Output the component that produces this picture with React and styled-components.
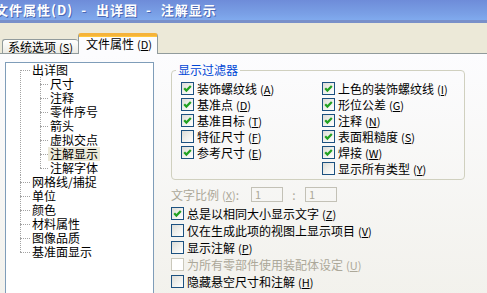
import React from 'react';
import styled, { createGlobalStyle } from 'styled-components';

const Global = createGlobalStyle`
  html, body { margin: 0; padding: 0; background: #ece9d8; }
  body { font-family: "Noto Sans CJK SC", "Noto Sans", sans-serif; font-size: 12px; color: #000; }
`;

const Window = styled.div`
  width: 487px;
  height: 293px;
  overflow: hidden;
  display: flex;
  flex-direction: column;
  background: #ece9d8;
`;

const TitleBar = styled.div`
  flex: none;
  height: 20px;
  border-bottom: 3px solid #7990c9;
  background: linear-gradient(#6e8cd9, #7aa0e6 70%, #80aaee);
  display: flex;
  align-items: center;
  white-space: nowrap;
`;

const TitleText = styled.span`
  margin-left: -5px;
  color: #fff;
  font-weight: bold;
  font-size: 13px;
  letter-spacing: 1px;
  line-height: 20px;
  text-shadow: 1px 1px 0 #4b68b4;
`;

const Sep = styled.span`
  padding: 0 9px 0 8px;
`;

const TabStrip = styled.div`
  flex: none;
  height: 30px;
  border-bottom: 1px solid #919b9c;
  display: flex;
  align-items: flex-end;
  padding-left: 2px;
`;

const Tab = styled.div`
  box-sizing: border-box;
  border: 1px solid #919b9c;
  border-bottom: none;
  border-radius: 3px 3px 0 0;
  white-space: nowrap;
  display: flex;
  align-items: center;
  ${p => p.$active ? `
    width: 80px;
    height: 21px;
    margin-bottom: -1px;
    background: #fcfcfe;
    border-top: 3px solid #f5b33a;
    box-shadow: inset 0 1px 0 #ffc83c;
    padding: 0 0 2px 7px;
  ` : `
    width: 76px;
    height: 14px;
    background: linear-gradient(#ffffff, #ecebe5);
    border-right: none;
    padding-left: 5px;
  `}
  font-size: 12px;
  line-height: 14px;
`;

const Key = styled.span`
  font-size: 11px;
  margin-left: 3px;
  u { text-decoration: underline; text-underline-offset: 1px; }
`;

const Panel = styled.div`
  flex: 1;
  display: flex;
  align-items: flex-start;
  padding: 8px 0 0 5px;
  background: linear-gradient(#fcfcfe, #f1f0ea);
`;

const TreeBox = styled.div`
  flex: none;
  width: 147px;
  height: 260px;
  border: 1px solid #7f9db9;
  background: #fff;
`;

const TreeList = styled.ul`
  list-style: none;
  margin: 0 0 0 ${p => p.$indent}px;
  padding: 0;
`;

const dots = 'repeating-linear-gradient(to bottom, #a3a3a3 0 1px, transparent 1px 2px)';

const TreeNode = styled.li`
  background-image: ${dots};
  background-repeat: no-repeat;
  ${p => p.$line === 'toMid' ? `
    background-size: 1px 8px;
    background-position: 0 0;
  ` : p.$line === 'fromMid' ? `
    background-size: 1px calc(100% - 7px);
    background-position: 0 7px;
  ` : `
    background-size: 1px 100%;
    background-position: 0 0;
  `}
`;

const TreeRow = styled.div`
  height: 14px;
  display: flex;
  align-items: center;
  white-space: nowrap;
`;

const Connector = styled.span`
  flex: none;
  width: ${p => p.$w}px;
  height: 0;
  border-top: 1px dotted #a3a3a3;
`;

const TreeLabel = styled.span`
  line-height: 14px;
  padding: 0 2px;
  background: ${p => p.$selected ? '#ece9d8' : 'transparent'};
`;

const RightCol = styled.div`
  margin-left: 17px;
  width: 294px;
  display: flex;
  flex-direction: column;
`;

const Group = styled.fieldset`
  margin: 1px 0 0 0;
  border: 1px solid #d0d0bf;
  border-radius: 4px;
  padding: 3px 8px 3px 9px;
  display: flex;
`;

const Legend = styled.legend`
  color: #0046d5;
  padding: 0 2px;
  margin-left: -5px;
  line-height: 14px;
  font-size: 12px;
`;

const Column = styled.div`
  display: flex;
  flex-direction: column;
  width: ${p => p.$w ? `${p.$w}px` : 'auto'};
`;

const CheckRow = styled.div`
  height: ${p => p.$h}px;
  display: flex;
  align-items: center;
  gap: 3px;
  white-space: nowrap;
  color: ${p => p.$disabled ? '#aca899' : '#000'};
`;

const Box = styled.span`
  flex: none;
  width: 11px;
  height: 11px;
  border: 1px solid ${p => p.$disabled ? '#cac8bb' : '#1c5180'};
  background: ${p => p.$disabled ? '#ffffff' : 'linear-gradient(135deg, #dcdcd7 0%, #eeeeea 45%, #ffffff 100%)'};
  display: flex;
  align-items: center;
  justify-content: center;
`;

const RatioRow = styled.div`
  margin-top: 6px;
  height: 16px;
  display: flex;
  align-items: center;
  color: #aca899;
  white-space: nowrap;
`;

const RatioLabel = styled.span`
  width: 80px;
  flex: none;
`;

const NumBox = styled.span`
  width: 27px;
  height: 13px;
  border: 1px solid #c3c1b6;
  font-size: 11px;
  line-height: 13px;
  padding-left: 3px;
  box-sizing: content-box;
`;

const Colon = styled.span`
  width: 22px;
  text-align: center;
`;

const Options = styled.div`
  margin-top: 3px;
  display: flex;
  flex-direction: column;
`;

function Check({ checked, disabled }) {
  return (
    <Box $disabled={disabled}>
      {checked && (
        <svg width="9" height="9" viewBox="0 0 9 9">
          <polyline points="1.2,4.2 3.4,6.6 7.8,2" fill="none" stroke="#21a121" strokeWidth="2.2" />
        </svg>
      )}
    </Box>
  );
}

function Option({ label, k, checked, disabled, h = 16 }) {
  return (
    <CheckRow $h={h} $disabled={disabled}>
      <Check checked={checked} disabled={disabled} />
      <span>
        {label}
        <Key>(<u>{k}</u>)</Key>
      </span>
    </CheckRow>
  );
}

const leftFilters = [
  ['装饰螺纹线', 'A', true],
  ['基准点', 'D', true],
  ['基准目标', 'T', true],
  ['特征尺寸', 'F', false],
  ['参考尺寸', 'E', true],
];

const rightFilters = [
  ['上色的装饰螺纹线', 'I', true],
  ['形位公差', 'G', true],
  ['注释', 'N', true],
  ['表面粗糙度', 'S', true],
  ['焊接', 'W', true],
  ['显示所有类型', 'Y', false],
];

const options = [
  ['总是以相同大小显示文字', 'Z', true, false],
  ['仅在生成此项的视图上显示项目', 'V', false, false],
  ['显示注解', 'P', false, false],
  ['为所有零部件使用装配体设定', 'U', false, true],
  ['隐藏悬空尺寸和注解', 'H', false, false],
];

const children = ['尺寸', '注释', '零件序号', '箭头', '虚拟交点', '注解显示', '注解字体'];
const topItems = ['网格线/捕捉', '单位', '颜色', '材料属性', '图像品质', '基准面显示'];

export default function App() {
  return (
    <>
      <Global />
      <Window>
        <TitleBar>
          <TitleText>
            文件属性(D)<Sep>-</Sep>出详图<Sep>-</Sep>注解显示
          </TitleText>
        </TitleBar>
        <TabStrip>
          <Tab>系统选项<Key>(<u>S</u>)</Key></Tab>
          <Tab $active>文件属性<Key>(<u>D</u>)</Key></Tab>
        </TabStrip>
        <Panel>
          <TreeBox>
            <TreeList $indent={14}>
              <TreeNode $line="fromMid">
                <TreeRow>
                  <Connector $w={10} />
                  <TreeLabel>出详图</TreeLabel>
                </TreeRow>
                <TreeList $indent={20}>
                  {children.map((c, i) => (
                    <TreeNode key={c} $line={i === children.length - 1 ? 'toMid' : 'full'}>
                      <TreeRow>
                        <Connector $w={8} />
                        <TreeLabel $selected={c === '注解显示'}>{c}</TreeLabel>
                      </TreeRow>
                    </TreeNode>
                  ))}
                </TreeList>
              </TreeNode>
              {topItems.map((t, i) => (
                <TreeNode key={t} $line={i === topItems.length - 1 ? 'toMid' : 'full'}>
                  <TreeRow>
                    <Connector $w={10} />
                    <TreeLabel>{t}</TreeLabel>
                  </TreeRow>
                </TreeNode>
              ))}
            </TreeList>
          </TreeBox>
          <RightCol>
            <Group>
              <Legend>显示过滤器</Legend>
              <Column $w={141}>
                {leftFilters.map(([l, k, c]) => (
                  <Option key={l} label={l} k={k} checked={c} />
                ))}
              </Column>
              <Column>
                {rightFilters.map(([l, k, c]) => (
                  <Option key={l} label={l} k={k} checked={c} />
                ))}
              </Column>
            </Group>
            <RatioRow>
              <RatioLabel>文字比例<Key>(<u>X</u>)</Key>:</RatioLabel>
              <NumBox>1</NumBox>
              <Colon>:</Colon>
              <NumBox>1</NumBox>
            </RatioRow>
            <Options>
              {options.map(([l, k, c, d]) => (
                <Option key={l} label={l} k={k} checked={c} disabled={d} h={17} />
              ))}
            </Options>
          </RightCol>
        </Panel>
      </Window>
    </>
  );
}
